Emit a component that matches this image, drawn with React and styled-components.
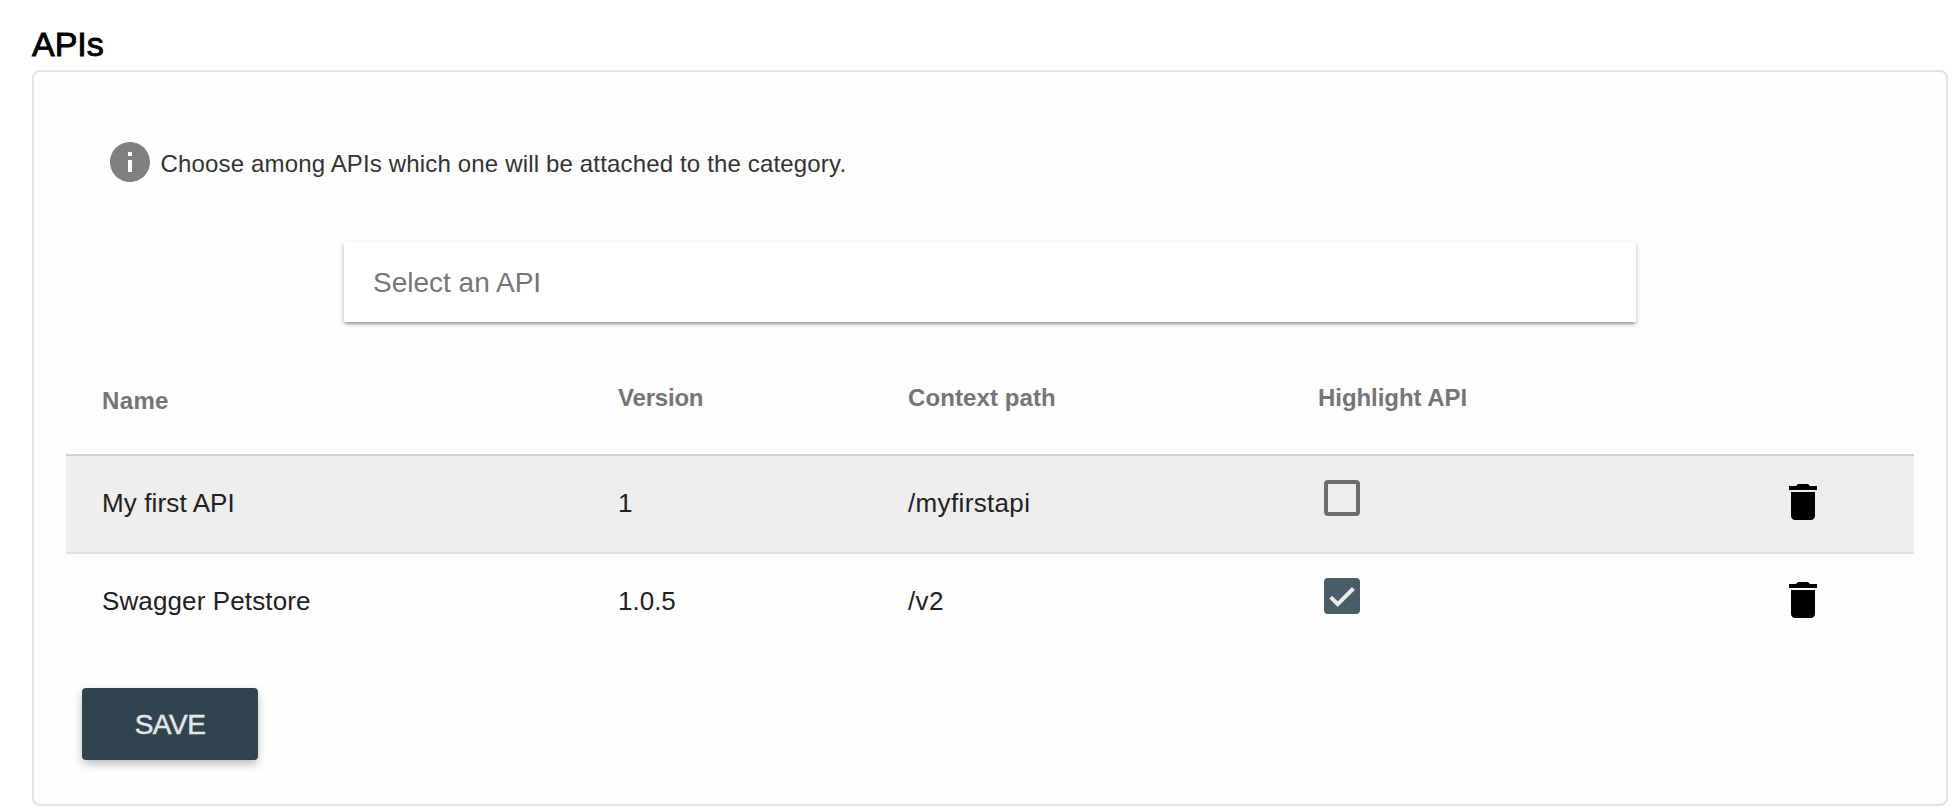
import React from "react";
import styled, { createGlobalStyle } from "styled-components";

const GlobalStyle = createGlobalStyle`
  * { box-sizing: border-box; }
  body {
    margin: 0;
    background: #fff;
    font-family: "Liberation Sans", Arial, sans-serif;
    color: #212121;
  }
`;

const Page = styled.main`
  height: 808px;
  padding: 24px 10px 0 32px;
`;

const Title = styled.h1`
  margin: 0;
  height: 46px;
  font-size: 34px;
  line-height: 41px;
  font-weight: 400;
  color: #000;
  -webkit-text-stroke: 0.9px #000;
`;

const Card = styled.section`
  height: 736px;
  padding: 66px 32px 0;
  border: 2px solid #e4e4e4;
  border-radius: 8px;
  background: #fefefe;
`;

const Hint = styled.div`
  display: flex;
  align-items: center;
  gap: 6.5px;
  height: 48px;
  margin-left: 40px;
`;

const HintText = styled.span`
  padding-top: 3px;
  font-size: 24px;
  line-height: 28px;
  letter-spacing: 0.16px;
  color: #333;
`;

const Icon = styled.svg`
  display: block;
  flex: none;
  width: 48px;
  height: 48px;
  fill: ${(p) => p.$color};
`;

const Search = styled.input`
  display: block;
  width: 1292px;
  height: 80px;
  margin: 56px auto 0;
  padding: 2px 29px 0;
  border: 0;
  background: #fff;
  box-shadow: 0 2px 6px rgba(0, 0, 0, 0.2), 0 2px 2px rgba(0, 0, 0, 0.14),
    0 4px 2px -2px rgba(0, 0, 0, 0.12);
  font: 28px "Liberation Sans", Arial, sans-serif;
  &::placeholder { color: #757575; opacity: 1; }
`;

const Table = styled.div`
  display: flex;
  flex-direction: column;
`;

const Row = styled.div`
  display: grid;
  grid-template-columns: 516px 290px 410px 461px 1fr;
  height: 98px;
  padding-left: 36px;
  border-top: 2px solid ${(p) => (p.$first ? "#d0d0d0" : "#e0e0e0")};
  background: ${(p) => (p.$first ? "#eee" : "transparent")};
`;

const HeadRow = styled(Row)`
  height: 132px;
  border-top: 0;
`;

const HeadCell = styled.div`
  padding-top: ${(p) => (p.$low ? 65 : 62)}px;
  font-size: 24px;
  line-height: 28px;
  font-weight: 700;
  letter-spacing: ${(p) => p.$track || 0}px;
  color: #757575;
`;

const Cell = styled.div`
  padding-top: 32px;
  font-size: 26px;
  line-height: 30px;
  letter-spacing: ${(p) => p.$track || 0}px;
`;

const ControlCell = styled.div`
  padding: ${(p) => p.$pad};
`;

const Checkbox = styled.div`
  width: 36px;
  height: 36px;
  border: ${(p) => (p.$checked ? "0" : "4px solid #6e6e6e")};
  border-radius: 4px;
  background: ${(p) => (p.$checked ? "#4a5c66" : "transparent")};
`;

const Check = styled.svg`
  display: block;
  width: 36px;
  height: 36px;
  fill: none;
  stroke: #e8ebec;
  stroke-width: 4;
`;

const SaveButton = styled.button`
  display: block;
  width: 176px;
  height: 72px;
  margin: 38px 0 0 16px;
  padding: 1px 0 0;
  border: 0;
  border-radius: 4px;
  background: #30434e;
  box-shadow: 0 4px 10px rgba(0, 0, 0, 0.26);
  font: 28px/70px "Liberation Sans", Arial, sans-serif;
  letter-spacing: -0.5px;
  color: #e3e6e7;
  -webkit-text-stroke: 0.5px #e3e6e7;
`;

const apis = [
  { name: "My first API", version: "1", path: "/myfirstapi", highlighted: false },
  { name: "Swagger Petstore", version: "1.0.5", path: "/v2", highlighted: true },
];

function InfoIcon() {
  return (
    <Icon viewBox="0 0 24 24" $color="#808080">
      <path d="M12 2C6.48 2 2 6.48 2 12s4.48 10 10 10 10-4.48 10-10S17.52 2 12 2zm1 15h-2v-6h2v6zm0-8h-2V7h2v2z" />
    </Icon>
  );
}

function DeleteIcon() {
  return (
    <Icon viewBox="0 0 24 24" $color="#000">
      <path d="M6 19c0 1.1.9 2 2 2h8c1.1 0 2-.9 2-2V7H6v12zM19 4h-3.5l-1-1h-5l-1 1H5v2h14V4z" />
    </Icon>
  );
}

export default function App() {
  return (
    <Page>
      <GlobalStyle />
      <Title>APIs</Title>
      <Card>
        <Hint>
          <InfoIcon />
          <HintText>Choose among APIs which one will be attached to the category.</HintText>
        </Hint>
        <Search placeholder="Select an API" />
        <Table>
          <HeadRow>
            <HeadCell $low $track={0.35}>Name</HeadCell>
            <HeadCell $track={-0.2}>Version</HeadCell>
            <HeadCell $track={0.1}>Context path</HeadCell>
            <HeadCell $track={-0.05}>Highlight API</HeadCell>
          </HeadRow>
          {apis.map((api, i) => (
            <Row key={api.name} $first={i === 0}>
              <Cell $track={0.12}>{api.name}</Cell>
              <Cell>{api.version}</Cell>
              <Cell $track={0.35}>{api.path}</Cell>
              <ControlCell $pad="24px 0 0 6px">
                <Checkbox $checked={api.highlighted}>
                  {api.highlighted && (
                    <Check viewBox="0 0 36 36">
                      <path d="M6.7 19.2L13.7 26.2L29.4 10.5" />
                    </Check>
                  )}
                </Checkbox>
              </ControlCell>
              <ControlCell $pad="22px 0 0">
                <DeleteIcon />
              </ControlCell>
            </Row>
          ))}
        </Table>
        <SaveButton>SAVE</SaveButton>
      </Card>
    </Page>
  );
}
